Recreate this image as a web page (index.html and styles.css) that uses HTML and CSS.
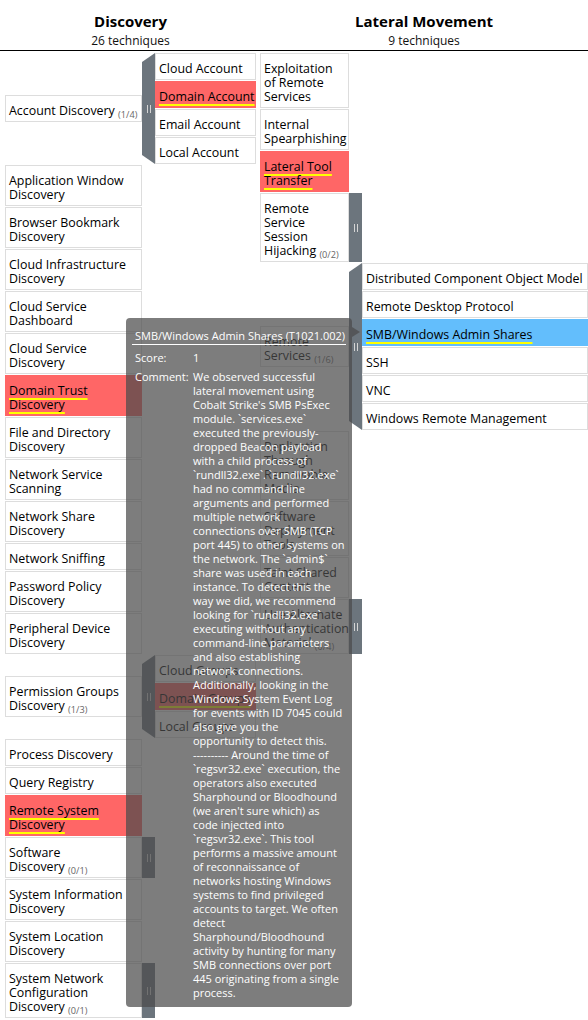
FILE: index.html
```html
<!DOCTYPE html>
<html lang="en">
<head>
<meta charset="utf-8">
<title>ATT&amp;CK Matrix</title>
<link rel="stylesheet" href="styles.css">
</head>
<body>
<div class="matrix">
  <div class="heads">
    <div class="head discovery">
      <div class="tname">Discovery</div>
      <div class="tcount">26 techniques</div>
    </div>
    <div class="head lateral">
      <div class="tname">Lateral Movement</div>
      <div class="tcount">9 techniques</div>
    </div>
  </div>

  <div class="columns">
    <div class="tactic discovery">
      <div class="row">
        <div class="cell tech">Account Discovery <span class="count">(1/4)</span></div>
        <div class="side open"></div>
        <div class="subs">
          <div class="cell">Cloud Account</div>
          <div class="cell red"><span class="mark">Domain Account</span></div>
          <div class="cell">Email Account</div>
          <div class="cell">Local Account</div>
        </div>
      </div>
      <div class="row"><div class="cell tech">Application Window<br>Discovery</div></div>
      <div class="row"><div class="cell tech">Browser Bookmark<br>Discovery</div></div>
      <div class="row"><div class="cell tech">Cloud Infrastructure<br>Discovery</div></div>
      <div class="row"><div class="cell tech">Cloud Service<br>Dashboard</div></div>
      <div class="row"><div class="cell tech">Cloud Service<br>Discovery</div></div>
      <div class="row"><div class="cell tech red"><span class="mark">Domain Trust</span><br><span class="mark">Discovery</span></div></div>
      <div class="row"><div class="cell tech">File and Directory<br>Discovery</div></div>
      <div class="row"><div class="cell tech">Network Service<br>Scanning</div></div>
      <div class="row"><div class="cell tech">Network Share<br>Discovery</div></div>
      <div class="row"><div class="cell tech">Network Sniffing</div></div>
      <div class="row"><div class="cell tech">Password Policy<br>Discovery</div></div>
      <div class="row"><div class="cell tech">Peripheral Device<br>Discovery</div></div>
      <div class="row">
        <div class="cell tech">Permission Groups<br>Discovery <span class="count">(1/3)</span></div>
        <div class="side open"></div>
        <div class="subs">
          <div class="cell">Cloud Groups</div>
          <div class="cell red"><span class="mark">Domain Groups</span></div>
          <div class="cell">Local Groups</div>
        </div>
      </div>
      <div class="row"><div class="cell tech">Process Discovery</div></div>
      <div class="row"><div class="cell tech">Query Registry</div></div>
      <div class="row"><div class="cell tech red"><span class="mark">Remote System</span><br><span class="mark">Discovery</span></div></div>
      <div class="row">
        <div class="cell tech">Software<br>Discovery <span class="count">(0/1)</span></div>
        <div class="side"></div>
      </div>
      <div class="row"><div class="cell tech">System Information<br>Discovery</div></div>
      <div class="row"><div class="cell tech">System Location<br>Discovery</div></div>
      <div class="row">
        <div class="cell tech">System Network<br>Configuration<br>Discovery <span class="count">(0/1)</span></div>
        <div class="side"></div>
      </div>
    </div>

    <div class="tactic lateral">
      <div class="row"><div class="cell tech">Exploitation<br>of Remote<br>Services</div></div>
      <div class="row"><div class="cell tech">Internal<br>Spearphishing</div></div>
      <div class="row"><div class="cell tech red"><span class="mark">Lateral Tool</span><br><span class="mark">Transfer</span></div></div>
      <div class="row">
        <div class="cell tech">Remote<br>Service<br>Session<br>Hijacking <span class="count">(0/2)</span></div>
        <div class="side"></div>
      </div>
      <div class="row">
        <div class="cell tech">Remote<br>Services <span class="count">(1/6)</span></div>
        <div class="side open"></div>
        <div class="subs">
          <div class="cell">Distributed Component Object Model</div>
          <div class="cell">Remote Desktop Protocol</div>
          <div class="cell blue"><span class="mark">SMB/Windows Admin Shares</span></div>
          <div class="cell">SSH</div>
          <div class="cell">VNC</div>
          <div class="cell">Windows Remote Management</div>
        </div>
      </div>
      <div class="row"><div class="cell tech">Replication<br>Through<br>Removable<br>Media</div></div>
      <div class="row"><div class="cell tech">Software<br>Deployment<br>Tools</div></div>
      <div class="row"><div class="cell tech">Taint Shared<br>Content</div></div>
      <div class="row">
        <div class="cell tech">Use Alternate<br>Authentication<br>Material <span class="count">(0/4)</span></div>
        <div class="side"></div>
      </div>
    </div>
  </div>

  <div class="tooltip">
    <div class="tt-title">SMB/Windows Admin Shares (T1021.002)</div>
    <div class="tt-rows">
      <div class="tt-label">Score:</div>
      <div class="tt-val">1</div>
      <div class="tt-label">Comment:</div>
      <div class="tt-val">We observed successful<br>lateral movement using<br>Cobalt Strike's SMB PsExec<br>module. `services.exe`<br>executed the previously-<br>dropped Beacon payload<br>with a child process of<br>`rundll32.exe`. `rundll32.exe`<br>had no command line<br>arguments and performed<br>multiple network<br>connections over SMB (TCP<br>port 445) to other systems on<br>the network. The `admin$`<br>share was used in each<br>instance. To detect this the<br>way we did, we recommend<br>looking for `rundll32.exe`<br>executing without any<br>command-line parameters<br>and also establishing<br>network connections.<br>Additionally, looking in the<br>Windows System Event Log<br>for events with ID 7045 could<br>also give you the<br>opportunity to detect this.<br>---------- Around the time of<br>`regsvr32.exe` execution, the<br>operators also executed<br>Sharphound or Bloodhound<br>(we aren't sure which) as<br>code injected into<br>`regsvr32.exe`. This tool<br>performs a massive amount<br>of reconnaissance of<br>networks hosting Windows<br>systems to find privileged<br>accounts to target. We often<br>detect<br>Sharphound/Bloodhound<br>activity by hunting for many<br>SMB connections over port<br>445 originating from a single<br>process.</div>
    </div>
  </div>
</div>
</body>
</html>
```

FILE: styles.css
```css
html, body {
  margin: 0;
  padding: 0;
  overflow: hidden;
  background: #fff;
}

body {
  font-family: "Open Sans", "Noto Sans", sans-serif;
  color: #000;
}

.matrix {
  position: relative;
}

/* tactic headers */
.heads {
  display: flex;
  gap: 4px;
  padding: 12px 0 2px 5px;
  border-bottom: 1px solid #000;
}

.head {
  text-align: center;
}

.head.discovery { width: 251px; }
.head.lateral { width: 328px; }

.tname {
  font-size: 15px;
  font-weight: 700;
  line-height: 18px;
}

.tcount {
  font-size: 12px;
  line-height: 14px;
  margin-top: 4px;
  color: #111;
}

/* columns */
.columns {
  display: flex;
  gap: 4px;
  padding: 2px 0 0 5px;
  align-items: flex-start;
}

.tactic {
  display: flex;
  flex-direction: column;
  gap: 1px;
}

.tactic.discovery { --tech: 137px; --sub: 101px; width: 251px; }
.tactic.lateral { --tech: 89px; --sub: 226px; width: 328px; }

.row {
  display: flex;
  align-items: center;
}

.cell {
  box-sizing: border-box;
  border: 1px solid #ddd;
  padding: 8px 2px 3px 3px;
  font-size: 12.4px;
  line-height: 14px;
  white-space: nowrap;
  background: #fff;
  color: #000;
}

.tech {
  width: var(--tech);
}

.subs {
  display: flex;
  flex-direction: column;
  gap: 1px;
  width: var(--sub);
}

.count {
  font-size: 9.2px;
  line-height: 0;
  vertical-align: -3px;
  color: #666;
}

.red {
  background: #ff6666;
  border-color: #ff6666;
}

.blue {
  background: #63befc;
  border-color: #63befc;
}

.mark {
  text-decoration: underline;
  text-decoration-color: #ffff00;
  text-decoration-thickness: 2px;
  text-underline-offset: 3px;
  text-decoration-skip-ink: none;
}

/* sub-technique sidebar */
.side {
  align-self: stretch;
  width: 13px;
  flex: none;
  background: #6c757d;
  display: flex;
  align-items: center;
  justify-content: center;
}

.side.open {
  clip-path: polygon(0 9px, 100% 0, 100% 100%, 0 calc(100% - 9px));
}

.side::before {
  content: "";
  width: 2px;
  height: 8px;
  border-left: 1px solid #d4d4d4;
  border-right: 1px solid #d4d4d4;
}

/* tooltip */
.tooltip {
  position: absolute;
  left: 126px;
  top: 318px;
  width: 226px;
  box-sizing: border-box;
  padding: 11px 6px 4px;
  background: rgba(75, 75, 75, 0.72);
  color: #fff;
  border-radius: 4px;
  font-size: 11px;
  line-height: 14px;
}

.tooltip::after {
  content: "";
  position: absolute;
  right: -8px;
  top: 9px;
  width: 0;
  height: 0;
  border-left: 8px solid rgba(75, 75, 75, 0.72);
  border-top: 5px solid transparent;
  border-bottom: 5px solid transparent;
}

.tt-title {
  padding: 0 3px 1px;
  border-bottom: 1px solid #fff;
  margin-bottom: 2px;
  white-space: nowrap;
}

.tt-rows {
  display: grid;
  grid-template-columns: 58px 1fr;
}

.tt-label,
.tt-val {
  padding: 3px;
  white-space: nowrap;
}

.tt-label:first-child,
.tt-label:first-child + .tt-val {
  padding-top: 4px;
  padding-bottom: 2px;
}
```
